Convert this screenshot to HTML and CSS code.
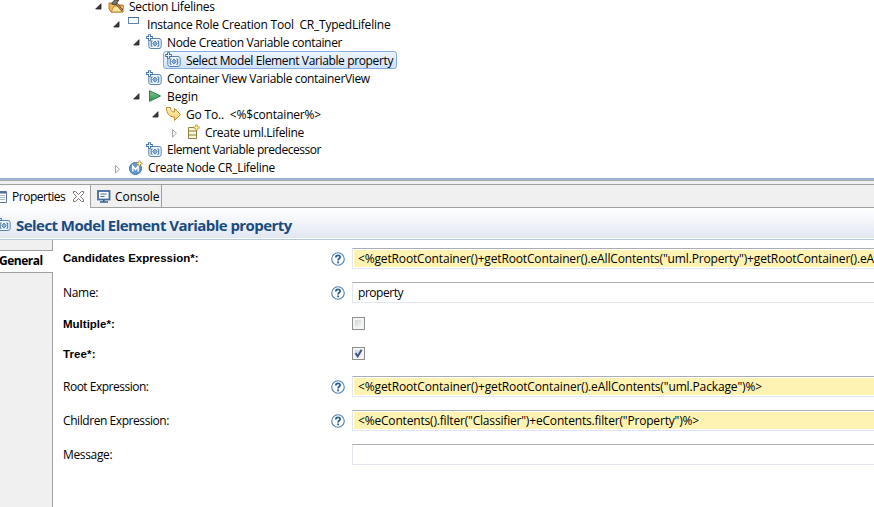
FILE: index.html
```
<!DOCTYPE html>
<html lang="en">
<head>
<meta charset="utf-8">
<title>Properties</title>
<link rel="stylesheet" href="styles.css">
</head>
<body>
<svg class="defs" width="0" height="0" aria-hidden="true">
  <defs>
    <linearGradient id="gold" x2="0" y2="1"><stop stop-color="#fff6c8"/><stop offset="1" stop-color="#f7ca5c"/></linearGradient>
    <linearGradient id="green" x2="0" y2="1"><stop stop-color="#80c595"/><stop offset="1" stop-color="#31914e"/></linearGradient>
  </defs>
  <symbol id="open" viewBox="0 0 7 7"><path d="M6 .7V6H.7Z" fill="#3b3b3b" stroke="#222" stroke-width=".8"/></symbol>
  <symbol id="closed" viewBox="0 0 7 10"><path d="M1.5 1.5V9L5.4 5.25Z" fill="#fff" stroke="#a2a2a2"/></symbol>
  <symbol id="variable" viewBox="0 0 16 16">
    <rect x="2.8" y="4.5" width="12.4" height="10" rx="2.2" fill="#eef6fc" stroke="#5584b2"/>
    <path d="M6.6 7H5.2v5.2h1.4M11.3 7h1.4v5.2h-1.4" fill="none" stroke="#416f9e"/>
    <path d="M9 7 11.3 9.6 9 12.2 6.7 9.6Z" fill="#8fb5d5" stroke="#3d6f9f" stroke-width=".8"/>
    <path d="M3.5 .2v6.6M.2 3.5h6.6" stroke="#3c6d9c" stroke-width="2.8"/><path d="M3.5 1v5M1 3.5h5" stroke="#e6f4ff" stroke-width="1"/>
  </symbol>
  <symbol id="help" viewBox="0 0 15 15">
    <circle cx="7.5" cy="7.5" r="6.7" fill="#fff" stroke="#4f83b1" stroke-width="1.2"/>
    <path d="M5.2 5.8C5.2 3 9.8 3 9.8 5.5c0 1.6-2.2 1.5-2.2 3.5" fill="none" stroke="#285f94" stroke-width="1.9"/><path d="M6.6 10.2h2v1.9h-2z" fill="#285f94"/>
  </symbol>
</svg>

<main class="window">
  <section class="tree">
    <div class="row l0 first"><svg class="arrow"><use href="#open"/></svg><div class="node">
      <svg class="icon" viewBox="0 0 16 16"><path d="M1 5h5l1 2h8v7H3L1 11Z" fill="#eeb751" stroke="#b47b2c"/><path d="M3 14 6 8h10l-3 6Z" fill="#ffe49a" stroke="#bd8938"/><path d="m7.5 4.5 7 8" stroke="#704a2d" stroke-width="2.4"/><path d="m8 5 6 7" stroke="#d7a15e"/><path d="m3.5 6 2.6-3.6L11 1.8 7.4 6.8Z" fill="#777" stroke="#494643"/></svg>
      <span class="t-section">Section Lifelines</span></div></div>
    <div class="row l1"><svg class="arrow"><use href="#open"/></svg><div class="node">
      <svg class="icon" viewBox="0 0 16 16"><rect x="2.5" y="1.5" width="10" height="6" fill="#f5faff" stroke="#6387ac"/><path d="M2 1.5h11" stroke="#466d97"/></svg>
      <span class="t-instance">Instance Role Creation Tool&nbsp; CR_TypedLifeline</span></div></div>
    <div class="row l2"><svg class="arrow"><use href="#open"/></svg><div class="node"><svg class="icon"><use href="#variable"/></svg><span class="t-node">Node Creation Variable container</span></div></div>
    <div class="row l3"><span class="arrow"></span><div class="node selected"><svg class="icon"><use href="#variable"/></svg><span class="t-select">Select Model Element Variable property</span></div></div>
    <div class="row l2"><span class="arrow"></span><div class="node"><svg class="icon"><use href="#variable"/></svg><span class="t-view">Container View Variable containerView</span></div></div>
    <div class="row l2"><svg class="arrow"><use href="#open"/></svg><div class="node">
      <svg class="icon" viewBox="0 0 16 16"><path d="M3.5 2.7v10.6L14.5 8Z" fill="url(#green)" stroke="#24843f"/></svg>
      <span class="t-begin">Begin</span></div></div>
    <div class="row l3"><svg class="arrow"><use href="#open"/></svg><div class="node">
      <svg class="icon" viewBox="0 0 16 16"><path d="M1.5 1.5h4c0 3 1 4.5 4 4.5V2.5l6 6-6 6V11C4 11 1.5 7 1.5 1.5Z" fill="url(#gold)" stroke="#c08a2a"/></svg>
      <span class="t-goto">Go To..&nbsp; &lt;%$container%&gt;</span></div></div>
    <div class="row l4"><svg class="arrow tall"><use href="#closed"/></svg><div class="node">
      <svg class="icon" viewBox="0 0 16 16"><path d="M4.5 3.5h8v11h-8zM4.5 7h8M4.5 11h8" fill="#faf6db" stroke="#8d8140"/><path d="M12.5 .5v6M9.5 3.5h6" stroke="#b98b24" stroke-width="2"/><path d="M12.5 1.5v4M10.5 3.5h4" stroke="#fff2ab"/></svg>
      <span class="t-create">Create uml.Lifeline</span></div></div>
    <div class="row l2 short"><span class="arrow"></span><div class="node"><svg class="icon"><use href="#variable"/></svg><span class="t-element">Element Variable predecessor</span></div></div>
    <div class="row l1 last"><svg class="arrow tall"><use href="#closed"/></svg><div class="node">
      <svg class="icon" viewBox="0 0 16 16"><circle cx="8.5" cy="8.5" r="6" fill="#6399cd" stroke="#3b73a8"/><path d="M5.8 11.5V6l2.7 3.5L11.2 6v5.5" fill="none" stroke="#fff" stroke-width="1.4"/><path d="M12.5 .5v6M9.5 3.5h6" stroke="#b98b24" stroke-width="2"/><path d="M12.5 1.5v4M10.5 3.5h4" stroke="#fff2ab"/></svg>
      <span class="t-lifeline">Create Node CR_Lifeline</span></div></div>
  </section>

  <nav class="tabs">
    <div class="tab active">
      <svg class="sheet" viewBox="0 0 7 12"><path d="M0 .5h6.5v11H0" fill="#fff" stroke="#63799b"/><path d="M0 1.5h6" stroke="#526d96" stroke-width="2"/><path d="M0 4.5h5M0 6.5h5M0 8.5h5" stroke="#aabbd0"/></svg>
      <span class="t-props">Properties</span>
      <svg class="close" viewBox="0 0 11 11"><path d="M.5.5h2l3 3 3-3h2v2l-3 3 3 3v2h-2l-3-3-3 3h-2v-2l3-3-3-3Z" fill="#fff" stroke="#777"/></svg>
    </div>
    <div class="tab console">
      <svg class="monitor" viewBox="0 0 14 13"><rect x="1" y="1" width="11.5" height="8.5" fill="#fff" stroke="#426b9f" stroke-width="1.8"/><path d="M3.5 4h6M3.5 6.5h4" stroke="#426b9f"/><path d="M6.8 10v1.3M3 12h8" stroke="#345f93" stroke-width="1.6"/></svg>
      <span class="t-console">Console</span>
    </div>
  </nav>

  <header class="title"><svg class="icon"><use href="#variable"/></svg><h1>Select Model Element Variable property</h1></header>

  <section class="body">
    <aside class="side"><div class="side-tab">General</div></aside>
    <form class="form">
      <label class="strong">Candidates Expression*:</label><svg class="help"><use href="#help"/></svg><div class="field expr x-cand">&lt;%getRootContainer()+getRootContainer().eAllContents("uml.Property")+getRootContainer().eAll</div>
      <label class="t-name">Name:</label><svg class="help"><use href="#help"/></svg><div class="field x-name">property</div>
      <label class="strong low">Multiple*:</label><span></span><span class="check"></span>
      <label class="strong low t-tree">Tree*:</label><span></span><span class="check"><svg viewBox="0 0 9 9"><path d="M1.5 4 3.7 7.3 7.6 .8" fill="none" stroke="#3f5597" stroke-width="2"/></svg></span>
      <label class="t-root">Root Expression:</label><svg class="help"><use href="#help"/></svg><div class="field expr x-root">&lt;%getRootContainer()+getRootContainer().eAllContents("uml.Package")%&gt;</div>
      <label class="t-child">Children Expression:</label><svg class="help"><use href="#help"/></svg><div class="field expr x-child">&lt;%eContents().filter("Classifier")+eContents.filter("Property")%&gt;</div>
      <label class="t-msg">Message:</label><span></span><div class="field"></div>
    </form>
  </section>
</main>
</body>
</html>
```
FILE: styles.css
```
* { box-sizing: border-box; }
body { margin: 0; background: #fff; color: #000; font: 12px/16px "Open Sans", sans-serif; }
svg { display: block; flex: none; }
.defs { position: absolute; }
.window { width: 874px; height: 507px; overflow: hidden; display: flex; flex-direction: column; white-space: nowrap; }

/* Model tree */
.tree { height: 178px; flex: none; }
.row { display: flex; align-items: center; height: 18px; }
.row.first { height: 15px; }
.row.short { height: 17px; }
.row.last { height: 20px; }
.first .node, .first .arrow { margin-top: -3px; }
.l0 { padding-left: 95px; }
.l1 { padding-left: 113px; }
.l2 { padding-left: 133px; }
.l3 { padding-left: 152px; }
.l4 { padding-left: 171px; }
.arrow { width: 7px; height: 7px; margin-right: 6px; flex: none; }
.arrow.tall { height: 10px; margin-top: 1px; }
.icon { width: 16px; height: 16px; }
.node { display: flex; align-items: center; gap: 5px; height: 18px; }
.node span { margin-top: 2px; }
.short .node span, .last .node span { margin-top: 0; }
.last { padding-left: 114px; }
.selected { margin-left: -2px; padding: 0 3px 0 1px; border: 1px solid #84acdd; border-radius: 3px; background: linear-gradient(#ecf4fe, #cfe2fc); }

.t-section { letter-spacing: -.25px; }
.t-instance { letter-spacing: -.225px; }
.t-node, .t-view { letter-spacing: -.35px; }
.t-select { letter-spacing: -.365px; }
.t-begin { letter-spacing: -.08px; }
.t-goto { letter-spacing: -.18px; }
.t-create { letter-spacing: -.31px; }
.t-lifeline { letter-spacing: -.3px; }
.t-element { letter-spacing: -.455px; }

/* View tabs */
.tabs { height: 30px; flex: none; display: flex; background: linear-gradient(#98b4d2 0 2px, #a9a9a9 2px 3px, #f0f0f0 3px 6px, #a0a0a0 6px 7px, #f0f0f0 7px 29px, #a0a0a0 29px); padding-top: 7px; }
.tab { display: flex; align-items: center; height: 22px; border-right: 1px solid #a0a0a0; }
.tab.active { width: 91px; height: 23px; background: linear-gradient(#fafafa, #fff); }
.sheet { width: 7px; height: 12px; margin-right: 5px; }
.close { width: 11px; height: 11px; margin-left: 8px; }
.tab.console { width: 71px; padding-left: 6px; }
.monitor { width: 14px; height: 13px; margin-right: 4px; }
.t-props { width: 53px; margin-top: 1px; letter-spacing: -.48px; }
.t-console { margin-top: 2px; letter-spacing: -.05px; }

/* Page heading */
.title { height: 32px; flex: none; display: flex; align-items: center; gap: 5px; background: linear-gradient(#fff, #e1e8f2 30px, #fff 30px 31px, #b3c7df 31px); }
.title .icon { margin-left: -5px; }
.title h1 { margin: 2px 0 0; font-size: 15px; line-height: 20px; letter-spacing: -.545px; color: #1b4b80; }

/* Properties */
.body { flex: 1; display: flex; min-height: 0; }
.side { width: 53px; flex: none; padding-top: 10px; background: linear-gradient(#a0a0a0, #a0a0a0) right / 1px 100% no-repeat #f0f0f0; }
.side-tab { height: 23px; border: solid #a0a0a0; border-width: 1px 0; background: #fff; font-weight: bold; line-height: 20px; text-indent: -1px; letter-spacing: -.5px; }
.form { flex: 1; display: grid; grid-template-columns: 268px 21px 1fr; grid-template-rows: 21px 21px 14px 17px 24px 21px 21px; row-gap: 13px; align-items: end; align-content: start; padding: 8px 0 0 10px; min-width: 0; }
label { line-height: 20px; }
.strong { font: bold 11.5px/21px "Liberation Sans", sans-serif; }
.strong.low { line-height: 13px; margin-bottom: -1px; }
.t-tree { letter-spacing: .1px; }
.t-name { letter-spacing: -.3px; }
.t-root { letter-spacing: -.49px; }
.t-child { letter-spacing: -.43px; }
.t-msg { letter-spacing: -.35px; }
.help { width: 14px; height: 14px; margin-bottom: 3px; }
.field { height: 21px; overflow: hidden; border: 1px solid #e2e6ee; border-top-color: #abadb3; border-right: 0; padding-left: 5px; line-height: 19px; }
.expr { background: linear-gradient(#fff3b3, #fff3b3) 1px 1px / 100% 17px no-repeat; }
.x-name { letter-spacing: -.45px; }
.x-cand { letter-spacing: -.15px; }
.x-root { letter-spacing: -.135px; }
.x-child { letter-spacing: -.18px; }
.check { width: 13px; height: 13px; padding: 1px; border: 1px solid #8e8f8f; background: linear-gradient(135deg, #cfd3d8, #f8f8f8) 2px 2px / 7px 7px no-repeat #f4f4f4; }
```
